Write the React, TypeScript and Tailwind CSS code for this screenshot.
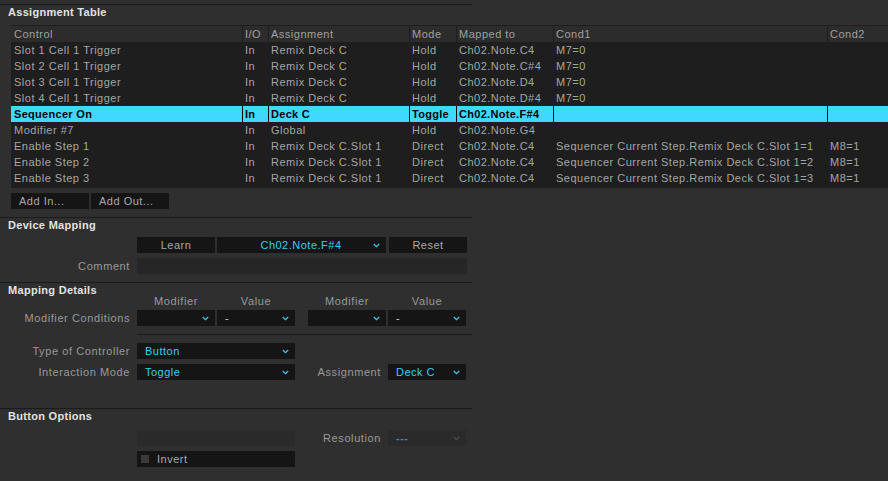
import React from "react";

const rows: string[][] = [
  ["Slot 1 Cell 1 Trigger", "In", "Remix Deck C", "Hold", "Ch02.Note.C4", "M7=0", ""],
  ["Slot 2 Cell 1 Trigger", "In", "Remix Deck C", "Hold", "Ch02.Note.C#4", "M7=0", ""],
  ["Slot 3 Cell 1 Trigger", "In", "Remix Deck C", "Hold", "Ch02.Note.D4", "M7=0", ""],
  ["Slot 4 Cell 1 Trigger", "In", "Remix Deck C", "Hold", "Ch02.Note.D#4", "M7=0", ""],
  ["Sequencer On", "In", "Deck C", "Toggle", "Ch02.Note.F#4", "", ""],
  ["Modifier #7", "In", "Global", "Hold", "Ch02.Note.G4", "", ""],
  ["Enable Step 1", "In", "Remix Deck C.Slot 1", "Direct", "Ch02.Note.C4", "Sequencer Current Step.Remix Deck C.Slot 1=1", "M8=1"],
  ["Enable Step 2", "In", "Remix Deck C.Slot 1", "Direct", "Ch02.Note.C4", "Sequencer Current Step.Remix Deck C.Slot 1=2", "M8=1"],
  ["Enable Step 3", "In", "Remix Deck C.Slot 1", "Direct", "Ch02.Note.C4", "Sequencer Current Step.Remix Deck C.Slot 1=3", "M8=1"],
];

const headers = ["Control", "I/O", "Assignment", "Mode", "Mapped to", "Cond1", "Cond2"];
const widths = ["w-[231px]", "w-[26px]", "w-[141px]", "w-[47px]", "w-[97px]", "w-[274px]", "flex-1"];

function Chevron({ dim }: { dim?: boolean }) {
  return (
    <svg width="7" height="5" viewBox="0 0 7 5" className="shrink-0">
      <polyline
        points="0.8,1 3.5,3.6 6.2,1"
        fill="none"
        stroke={dim ? "#4a4a4a" : "#3cc6ee"}
        strokeWidth="1.3"
      />
    </svg>
  );
}

function Title({ children, h }: { children: React.ReactNode; h: string }) {
  return (
    <div className={`${h} pl-[8px] leading-[14px] font-bold text-[#e2e2e2] tracking-[0.3px]`}>{children}</div>
  );
}

function Line({ cls = "w-[472px]" }: { cls?: string }) {
  return <div className={`${cls} h-px bg-[#1b1b1b]`} />;
}

function Label({ children, w = "w-[130px]" }: { children: React.ReactNode; w?: string }) {
  return <div className={`${w} text-right text-[#999999] mr-[7px] leading-[16px] tracking-[0.6px]`}>{children}</div>;
}

function Dropdown({
  w,
  value,
  center,
  white,
  dim,
  cls = "",
}: {
  w: string;
  value?: string;
  center?: boolean;
  white?: boolean;
  dim?: boolean;
  cls?: string;
}) {
  return (
    <div
      className={`${w} ${cls} h-[16px] ${dim ? "bg-[#2a2a2a]" : "bg-[#151515]"} flex items-center pr-[6px] ${
        center ? "" : "pl-[8px]"
      }`}
    >
      <div
        className={`flex-1 leading-[16px] ${center ? "text-center pl-[12px]" : ""} ${
          white ? "text-[#d0d0d0]" : dim ? "text-[#2d8fbd] font-bold" : "text-[#3ccaf2]"
        }`}
      >
        {value}
      </div>
      <Chevron dim={dim} />
    </div>
  );
}

function Btn({ w, children, cls = "" }: { w: string; children: React.ReactNode; cls?: string }) {
  return (
    <div className={`${w} ${cls} h-[16px] bg-[#151515] text-[#a8a8a8] text-center leading-[16px]`}>{children}</div>
  );
}

export default function App() {
  return (
    <div
      className="w-[888px] h-[481px] bg-[#2f2f2f] overflow-hidden text-[11px] tracking-[0.5px] text-[#a5a5a5] flex flex-col"
      style={{ fontFamily: '"Liberation Sans", Arial, sans-serif' }}
    >
      <div className="h-[4px]" />
      <Line />
      <Title h="h-[20px]">Assignment Table</Title>

      {/* table */}
      <div className="ml-[11px] bg-[#1e1e1e] pt-px pb-[2px] flex flex-col">
        <div className="flex h-[16px] bg-[#2c2c2c] text-[#a0a0a0] leading-[16px]">
          {headers.map((h, i) => (
            <div
              key={h}
              className={`${widths[i]} shrink-0 ${i === 0 ? "pl-[3px]" : "pl-[2px] border-l border-[#1e1e1e]"}`}
            >
              {h}
            </div>
          ))}
        </div>
        {rows.map((r, ri) => {
          const sel = ri === 4;
          return (
            <div
              key={ri}
              className={`flex h-[16px] leading-[16px] whitespace-nowrap ${
                sel ? "bg-[#3fd8ff] text-[#050505] font-bold tracking-[0.3px]" : ""
              }`}
            >
              {r.map((c, i) => (
                <div
                  key={i}
                  className={`${widths[i]} shrink-0 overflow-hidden ${
                    i === 0
                      ? "pl-[3px]"
                      : `pl-[2px] border-l ${sel ? "border-[#0a0a0a]" : "border-transparent"}`
                  }`}
                >
                  {c}
                </div>
              ))}
            </div>
          );
        })}
      </div>

      <div className="flex ml-[11px] mt-[5px] gap-[2px]">
        <div className="w-[78px] h-[16px] bg-[#151515] pl-[8px] leading-[16px] text-[#a8a8a8]">Add In...</div>
        <div className="w-[78px] h-[16px] bg-[#151515] pl-[8px] leading-[16px] text-[#a8a8a8]">Add Out...</div>
      </div>

      <div className="h-[8px]" />
      <Line />
      <Title h="h-[19px]">Device Mapping</Title>

      <div className="flex items-center h-[16px]">
        <div className="w-[137px]" />
        <Btn w="w-[78px]">Learn</Btn>
        <Dropdown w="w-[169px]" cls="ml-[2px]" value="Ch02.Note.F#4" center />
        <Btn w="w-[78px]" cls="ml-[3px]">Reset</Btn>
      </div>
      <div className="flex items-center h-[16px] mt-[5px]">
        <Label>Comment</Label>
        <div className="w-[330px] h-[16px] bg-[#262626]" />
      </div>

      <div className="h-[8px]" />
      <Line />
      <div className="h-[13px] pl-[8px] leading-[15px] font-bold text-[#e2e2e2] tracking-[0.3px]">Mapping Details</div>
      <div className="flex h-[14px] leading-[10px] text-[#999999] tracking-[0.6px]">
        <div className="w-[137px]" />
        <div className="w-[78px] text-center">Modifier</div>
        <div className="w-[78px] ml-[2px] text-center">Value</div>
        <div className="w-[78px] ml-[13px] text-center">Modifier</div>
        <div className="w-[78px] ml-[2px] text-center">Value</div>
      </div>
      <div className="flex items-center h-[16px]">
        <Label>Modifier Conditions</Label>
        <Dropdown w="w-[78px]" />
        <Dropdown w="w-[78px]" cls="ml-[2px]" value="-" white />
        <Dropdown w="w-[78px]" cls="ml-[13px]" />
        <Dropdown w="w-[78px]" cls="ml-[2px]" value="-" white />
      </div>

      <div className="h-[8px]" />
      <div className="flex">
        <div className="w-[137px]" />
        <Line cls="w-[335px]" />
      </div>

      <div className="flex items-center h-[16px] mt-[8px]">
        <Label>Type of Controller</Label>
        <Dropdown w="w-[158px]" value="Button" />
      </div>
      <div className="flex items-center h-[16px] mt-[5px]">
        <Label>Interaction Mode</Label>
        <Dropdown w="w-[158px]" value="Toggle" />
        <Label w="w-[86px]">Assignment</Label>
        <Dropdown w="w-[78px]" value="Deck C" />
      </div>

      <div className="h-[28px]" />
      <Line />
      <Title h="h-[21px]">Button Options</Title>
      <div className="flex items-center h-[16px]">
        <div className="w-[137px]" />
        <div className="w-[158px] h-[16px] bg-[#2a2a2a]" />
        <Label w="w-[86px]">Resolution</Label>
        <Dropdown w="w-[78px]" value="---" dim />
      </div>
      <div className="flex items-center h-[16px] mt-[5px]">
        <div className="w-[137px]" />
        <div className="w-[158px] h-[16px] bg-[#151515] flex items-center pl-[4px]">
          <div className="w-[8px] h-[8px] bg-[#3a3a3a]" />
          <div className="ml-[8px] leading-[16px] text-[#a8a8a8]">Invert</div>
        </div>
      </div>
    </div>
  );
}
